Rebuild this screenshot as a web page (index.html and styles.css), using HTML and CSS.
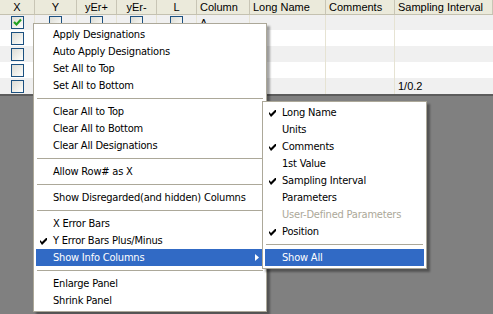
FILE: index.html
```
<!DOCTYPE html>
<html>
<head>
<meta charset="utf-8">
<link rel="stylesheet" href="styles.css">
</head>
<body>
<div class="screen">
  <div class="grid">
    <div class="row head">
      <div class="c c-x ctr">X</div>
      <div class="c c-y ctr">Y</div>
      <div class="c c-e ctr">yEr+</div>
      <div class="c c-e ctr">yEr-</div>
      <div class="c c-l ctr">L</div>
      <div class="c c-col">Column</div>
      <div class="c c-ln">Long Name</div>
      <div class="c c-cm">Comments</div>
      <div class="c c-si">Sampling Interval</div>
    </div>
    <div class="row alt first">
      <div class="c c-x ctr"><span class="cb"><svg width="11" height="11" viewBox="0 0 11 11"><path d="M2 5 L4.5 7.5 L9 2.5" fill="none" stroke="#21a121" stroke-width="2.2"/></svg></span></div>
      <div class="c c-y ctr"><span class="cb"></span></div>
      <div class="c c-e ctr"><span class="cb"></span></div>
      <div class="c c-e ctr"><span class="cb"></span></div>
      <div class="c c-l ctr"><span class="cb"></span></div>
      <div class="c c-col">A</div>
      <div class="c c-ln"></div>
      <div class="c c-cm"></div>
      <div class="c c-si"></div>
    </div>
    <div class="row">
      <div class="c c-x ctr"><span class="cb"></span></div>
      <div class="c c-y ctr"><span class="cb"></span></div>
      <div class="c c-e ctr"><span class="cb"></span></div>
      <div class="c c-e ctr"><span class="cb"></span></div>
      <div class="c c-l ctr"><span class="cb"></span></div>
      <div class="c c-col">B</div>
      <div class="c c-ln"></div>
      <div class="c c-cm"></div>
      <div class="c c-si"></div>
    </div>
    <div class="row alt">
      <div class="c c-x ctr"><span class="cb"></span></div>
      <div class="c c-y ctr"><span class="cb"></span></div>
      <div class="c c-e ctr"><span class="cb"></span></div>
      <div class="c c-e ctr"><span class="cb"></span></div>
      <div class="c c-l ctr"><span class="cb"></span></div>
      <div class="c c-col">C</div>
      <div class="c c-ln"></div>
      <div class="c c-cm"></div>
      <div class="c c-si"></div>
    </div>
    <div class="row">
      <div class="c c-x ctr"><span class="cb"></span></div>
      <div class="c c-y ctr"><span class="cb"></span></div>
      <div class="c c-e ctr"><span class="cb"></span></div>
      <div class="c c-e ctr"><span class="cb"></span></div>
      <div class="c c-l ctr"><span class="cb"></span></div>
      <div class="c c-col">D</div>
      <div class="c c-ln"></div>
      <div class="c c-cm"></div>
      <div class="c c-si"></div>
    </div>
    <div class="row alt">
      <div class="c c-x ctr"><span class="cb"></span></div>
      <div class="c c-y ctr"><span class="cb"></span></div>
      <div class="c c-e ctr"><span class="cb"></span></div>
      <div class="c c-e ctr"><span class="cb"></span></div>
      <div class="c c-l ctr"><span class="cb"></span></div>
      <div class="c c-col">E</div>
      <div class="c c-ln"></div>
      <div class="c c-cm"></div>
      <div class="c c-si">1/0.2</div>
    </div>
  </div>
  <div class="empty"></div>

  <div class="menu main-menu">
    <div class="item">Apply Designations</div>
    <div class="item">Auto Apply Designations</div>
    <div class="item">Set All to Top</div>
    <div class="item">Set All to Bottom</div>
    <div class="sep"></div>
    <div class="item">Clear All to Top</div>
    <div class="item">Clear All to Bottom</div>
    <div class="item">Clear All Designations</div>
    <div class="sep"></div>
    <div class="item">Allow Row# as X</div>
    <div class="sep"></div>
    <div class="item">Show Disregarded(and hidden) Columns</div>
    <div class="sep"></div>
    <div class="item">X Error Bars</div>
    <div class="item checked"><svg class="chk" width="7" height="7" viewBox="0 0 7 7"><polygon points="0,2 2,4 6,0 7,0 7,2 2,7 0,4"/></svg>Y Error Bars Plus/Minus</div>
    <div class="item hl">Show Info Columns<svg class="arrow" width="4" height="7" viewBox="0 0 4 7"><polygon points="0,0 4,3.5 0,7"/></svg></div>
    <div class="sep"></div>
    <div class="item">Enlarge Panel</div>
    <div class="item">Shrink Panel</div>
  </div>

  <div class="menu sub-menu">
    <div class="item checked"><svg class="chk" width="7" height="7" viewBox="0 0 7 7"><polygon points="0,2 2,4 6,0 7,0 7,2 2,7 0,4"/></svg>Long Name</div>
    <div class="item">Units</div>
    <div class="item checked"><svg class="chk" width="7" height="7" viewBox="0 0 7 7"><polygon points="0,2 2,4 6,0 7,0 7,2 2,7 0,4"/></svg>Comments</div>
    <div class="item">1st Value</div>
    <div class="item checked"><svg class="chk" width="7" height="7" viewBox="0 0 7 7"><polygon points="0,2 2,4 6,0 7,0 7,2 2,7 0,4"/></svg>Sampling Interval</div>
    <div class="item">Parameters</div>
    <div class="item disabled">User-Defined Parameters</div>
    <div class="item checked"><svg class="chk" width="7" height="7" viewBox="0 0 7 7"><polygon points="0,2 2,4 6,0 7,0 7,2 2,7 0,4"/></svg>Position</div>
    <div class="sep"></div>
    <div class="item hl">Show All</div>
  </div>
</div>
</body>
</html>
```
FILE: styles.css
```
html, body {
  margin: 0;
  padding: 0;
}
body {
  width: 493px;
  height: 314px;
  overflow: hidden;
  font-family: "Liberation Sans", Arial, sans-serif;
  font-size: 11px;
  color: #000;
}
.screen {
  position: relative;
  width: 493px;
  height: 314px;
  display: flex;
  flex-direction: column;
  background: #808080;
}
.grid {
  display: flex;
  flex-direction: column;
  background: #fff;
}
.row {
  display: flex;
  height: 16px;
  background: #fff;
}
.row.alt {
  background: #f0f0f0;
}
.row.first {
  height: 15px;
}
.row.head {
  height: 15px;
  background: #ebeadb;
  border-bottom: 1px solid #c4c1b0;
  box-sizing: border-box;
}
.c {
  flex: none;
  box-sizing: border-box;
  border-right: 1px solid #e6e3d3;
  padding-left: 3px;
  white-space: nowrap;
  overflow: hidden;
  display: flex;
  align-items: center;
}
.head .c {
  border-right: 1px solid #c8c5b5;
}
.ctr {
  justify-content: center;
  padding-left: 0;
}
.c-x { width: 35px; }
.c-y { width: 42px; }
.c-e { width: 40px; }
.c-l { width: 40px; }
.c-col { width: 53px; }
.c-ln { width: 76px; }
.c-cm { width: 69px; }
.c-si { flex: 1; border-right: none; }
.cb {
  width: 13px;
  height: 13px;
  box-sizing: border-box;
  border: 1px solid #1c5180;
  background: linear-gradient(135deg, #dcdcd5 0%, #f4f4f0 70%, #ffffff 100%);
  display: flex;
  align-items: center;
  justify-content: center;
}
.empty {
  flex: 1;
  border-top: 2px solid #5c5c5c;
  background: #808080;
}
.menu {
  position: absolute;
  background: #fff;
  border: 1px solid #aca899;
  padding: 2px;
  box-sizing: border-box;
  box-shadow: 3px 3px 2px rgba(0, 0, 0, 0.35);
  font-family: "DejaVu Sans Condensed", "DejaVu Sans", sans-serif;
  font-size: 11px;
  letter-spacing: -0.2px;
}
.main-menu {
  left: 33px;
  top: 23px;
  width: 234px;
  height: 289px;
}
.sub-menu {
  left: 262px;
  top: 101px;
  width: 165px;
  height: 168px;
}
.item {
  position: relative;
  height: 17px;
  line-height: 17px;
  padding-left: 17px;
  white-space: nowrap;
}
.item.hl {
  background: #316ac5;
  color: #fff;
}
.item.disabled {
  color: #aca899;
}
.chk {
  position: absolute;
  left: 4px;
  top: 6px;
  fill: #000;
}
.arrow {
  position: absolute;
  right: 5px;
  top: 5px;
  fill: #fff;
}
.sep {
  height: 1px;
  margin: 4px 1px;
  background: #aca899;
}
```
